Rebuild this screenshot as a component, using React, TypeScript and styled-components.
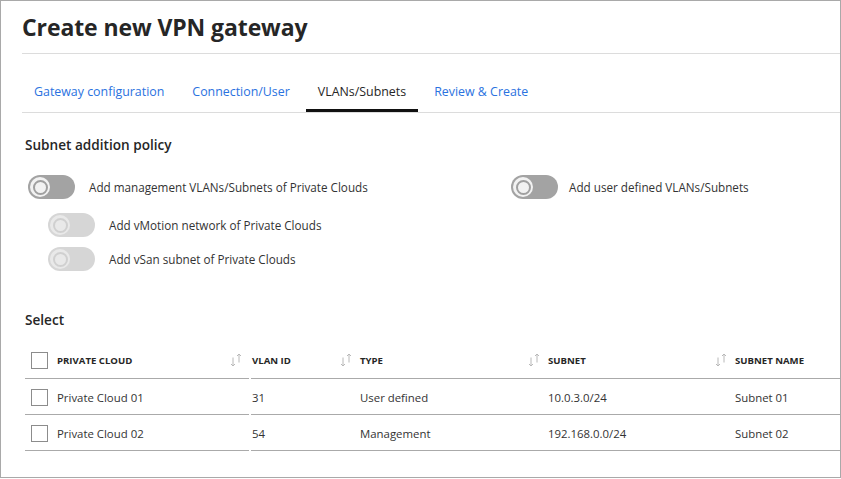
import React from 'react';
import styled, { createGlobalStyle } from 'styled-components';

const Global = createGlobalStyle`
  html, body { margin: 0; padding: 0; background: #fff; }
  body { font-family: "Open Sans", "Noto Sans", sans-serif; color: #333; }
  * { box-sizing: border-box; }
`;

const Frame = styled.div`
  width: 841px;
  height: 478px;
  border: 1px solid #a9a9a9;
  overflow: hidden;
  padding-left: 21px;
`;

const Title = styled.h1`
  margin: 0;
  padding-top: 10px;
  font-size: 23px;
  line-height: 32px;
  font-weight: 700;
  color: #262626;
  letter-spacing: -0.1px;
`;

const Divider = styled.div`
  margin-top: 10px;
  height: 1px;
  background: #dcdcdc;
`;

const TabBar = styled.nav`
  display: flex;
  gap: 4px;
  padding-top: 28px;
  border-bottom: 1px solid #dcdcdc;
`;

const Tab = styled.div<{ $active?: boolean }>`
  padding: 0 12px 7px;
  font-size: 12.4px;
  line-height: 20px;
  color: ${(p) => (p.$active ? '#262626' : '#2a72e0')};
  border-bottom: 3px solid ${(p) => (p.$active ? '#111' : 'transparent')};
`;

const Section = styled.section`
  padding-left: 3px;
`;

const SectionTitle = styled.h2<{ $gap: number }>`
  margin: ${(p) => p.$gap}px 0 0;
  font-size: 13.6px;
  line-height: 20px;
  font-weight: 600;
  color: #262626;
`;

const PolicyGrid = styled.div`
  margin-top: 20px;
  display: grid;
  grid-template-columns: 486px 1fr;
  align-items: start;
`;

const SubGroup = styled.div`
  margin-top: 14px;
  padding-left: 23px;
  display: flex;
  flex-direction: column;
  gap: 10px;
`;

const ToggleRow = styled.label<{ $indent?: number; $gap?: number }>`
  display: flex;
  align-items: center;
  gap: ${(p) => p.$gap ?? 14}px;
  padding-left: ${(p) => p.$indent ?? 0}px;
  font-size: 11.7px;
  color: #333;
`;

const Track = styled.span<{ $disabled?: boolean }>`
  width: 47px;
  height: 24px;
  flex: none;
  border-radius: 12px;
  background: ${(p) => (p.$disabled ? '#d6d6d6' : '#a3a3a3')};
  display: flex;
  align-items: center;
  padding-left: 2px;
`;

const Knob = styled.span<{ $disabled?: boolean }>`
  width: 20px;
  height: 20px;
  border-radius: 50%;
  background: ${(p) => (p.$disabled ? '#e9e9e9' : '#f2f2f2')};
  display: flex;
  align-items: center;
  justify-content: center;
  &::after {
    content: '';
    width: 11px;
    height: 11px;
    border-radius: 50%;
    border: 2px solid ${(p) => (p.$disabled ? '#d0d0d0' : '#a0a0a0')};
    background: ${(p) => (p.$disabled ? '#e9e9e9' : '#f2f2f2')};
  }
`;

const Table = styled.div`
  margin-top: 12px;
  display: grid;
  grid-template-columns: 226px 108px 188px 187px 1fr;
`;

const Cell = styled.div<{ $head?: boolean; $first?: boolean }>`
  height: ${(p) => (p.$head ? 37 : 36)}px;
  border-bottom: 1px solid #aaaaaa;
  display: flex;
  align-items: center;
  gap: 9px;
  padding-left: ${(p) => (p.$first ? 6 : 1)}px;
  padding-right: 7px;
  padding-top: ${(p) => (p.$head ? 0 : 1)}px;
  margin-right: ${(p) => (p.$first ? 2 : 0)}px;
  font-size: ${(p) => (p.$head ? '9.6px' : '11.4px')};
  font-weight: ${(p) => (p.$head ? 700 : 400)};
  color: ${(p) => (p.$head ? '#262626' : '#333')};
  text-transform: ${(p) => (p.$head ? 'uppercase' : 'none')};
  white-space: nowrap;
`;

const CellText = styled.span`
  flex: 1;
`;

const Box = styled.span`
  width: 17px;
  height: 17px;
  flex: none;
  border: 1px solid #8c8c8c;
  background: #fff;
`;

const SortIcon = () => (
  <svg width="12" height="14" viewBox="0 0 12 14" fill="none" stroke="#b8b8b8" strokeWidth="1">
    <path d="M3 4.5V13M1 11l2 2 2-2" />
    <path d="M9 1v8.5M7 3l2-2 2 2" />
  </svg>
);

const Toggle = ({
  label,
  disabled,
  indent,
  gap,
}: {
  label: string;
  disabled?: boolean;
  indent?: number;
  gap?: number;
}) => (
  <ToggleRow $indent={indent} $gap={gap}>
    <Track $disabled={disabled}>
      <Knob $disabled={disabled} />
    </Track>
    {label}
  </ToggleRow>
);

const headers = ['Private Cloud', 'VLAN ID', 'Type', 'Subnet', 'Subnet Name'];
const rows = [
  ['Private Cloud 01', '31', 'User defined', '10.0.3.0/24', 'Subnet 01'],
  ['Private Cloud 02', '54', 'Management', '192.168.0.0/24', 'Subnet 02'],
];

export default function App() {
  return (
    <>
      <Global />
      <Frame>
        <Title>Create new VPN gateway</Title>
        <Divider />
        <TabBar>
          <Tab>Gateway configuration</Tab>
          <Tab>Connection/User</Tab>
          <Tab $active>VLANs/Subnets</Tab>
          <Tab>Review &amp; Create</Tab>
        </TabBar>
        <Section>
          <SectionTitle $gap={22}>Subnet addition policy</SectionTitle>
          <PolicyGrid>
            <div>
              <Toggle label="Add management VLANs/Subnets of Private Clouds" indent={3} />
              <SubGroup>
                <Toggle label="Add vMotion network of Private Clouds" disabled />
                <Toggle label="Add vSan subnet of Private Clouds" disabled />
              </SubGroup>
            </div>
            <Toggle label="Add user defined VLANs/Subnets" gap={11} />
          </PolicyGrid>
          <SectionTitle $gap={39}>Select</SectionTitle>
          <Table>
            {headers.map((h, i) => (
              <Cell key={h} $head $first={i === 0}>
                {i === 0 && <Box />}
                <CellText>{h}</CellText>
                {i < 4 && <SortIcon />}
              </Cell>
            ))}
            {rows.map((r) =>
              r.map((v, i) => (
                <Cell key={r[0] + i} $first={i === 0}>
                  {i === 0 && <Box />}
                  <CellText>{v}</CellText>
                </Cell>
              ))
            )}
          </Table>
        </Section>
      </Frame>
    </>
  );
}
